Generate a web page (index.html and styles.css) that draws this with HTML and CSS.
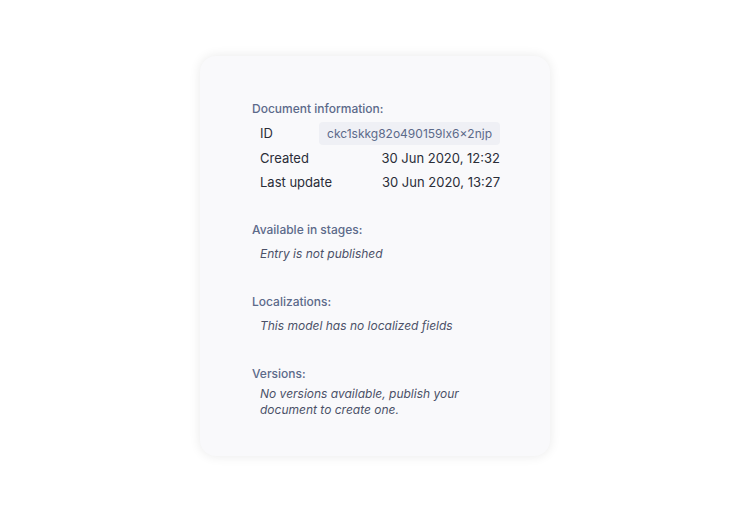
FILE: index.html
```html
<!DOCTYPE html>
<html lang="en">
<head>
    <meta charset="UTF-8">
    <meta name="viewport" content="width=device-width, initial-scale=1.0">
    <title>Document information</title>
    <link rel="stylesheet" href="styles.css">
</head>
<body>
    <div class="info-card">
        <div class="section section-meta">
            <h2>Document information:</h2>
            <div class="meta-row">
                <span class="meta-label">ID</span>
                <span class="meta-id">ckc1skkg82o490159lx6×2njp</span>
            </div>
            <div class="meta-row">
                <span class="meta-label">Created</span>
                <span class="meta-value">30 Jun 2020, 12:32</span>
            </div>
            <div class="meta-row">
                <span class="meta-label">Last update</span>
                <span class="meta-value">30 Jun 2020, 13:27</span>
            </div>
        </div>

        <div class="section">
            <h2>Available in stages:</h2>
            <p class="note">Entry is not published</p>
        </div>

        <div class="section">
            <h2>Localizations:</h2>
            <p class="note">This model has no localized fields</p>
        </div>

        <div class="section">
            <h2>Versions:</h2>
            <p class="note note-multi">No versions available, publish your document to create one.</p>
        </div>
    </div>
</body>
</html>
```

FILE: styles.css
```css
body {
    margin: 0;
    padding: 0;
    font-family: Inter, "Noto Sans", sans-serif;
    font-size: 13px;
    display: flex;
    justify-content: center;
    align-items: center;
    height: 100vh;
    background-color: #ffffff;
}

.info-card {
    width: 350px;
    height: 400px;
    box-sizing: border-box;
    padding: 45px 50px 0 52px;
    background-color: #f9f9fb;
    border-radius: 16px;
    box-shadow: 0 0 12px rgba(0, 0, 0, 0.09);
}

.section {
    margin-bottom: 32px;
}

.section-meta {
    margin-bottom: 27px;
}

.section h2 {
    margin: 0;
    font-size: 12px;
    font-weight: 500;
    line-height: 16px;
    color: #5c6a8a;
}

.meta-row {
    display: flex;
    justify-content: space-between;
    align-items: center;
    height: 24.5px;
    padding-left: 8px;
    color: #2a2d38;
}

.meta-row:first-of-type {
    margin-top: 4px;
}

.meta-id {
    padding: 0 8px;
    font-size: 12px;
    line-height: 23px;
    background-color: #eff0f5;
    border-radius: 4px;
    color: #5c6a8a;
}

.note {
    margin: 8px 0 0;
    padding-left: 8px;
    font-size: 12px;
    line-height: 16px;
    font-style: italic;
    color: #4b5168;
}

.note-multi {
    margin-top: 4px;
    max-width: 220px;
}
```
